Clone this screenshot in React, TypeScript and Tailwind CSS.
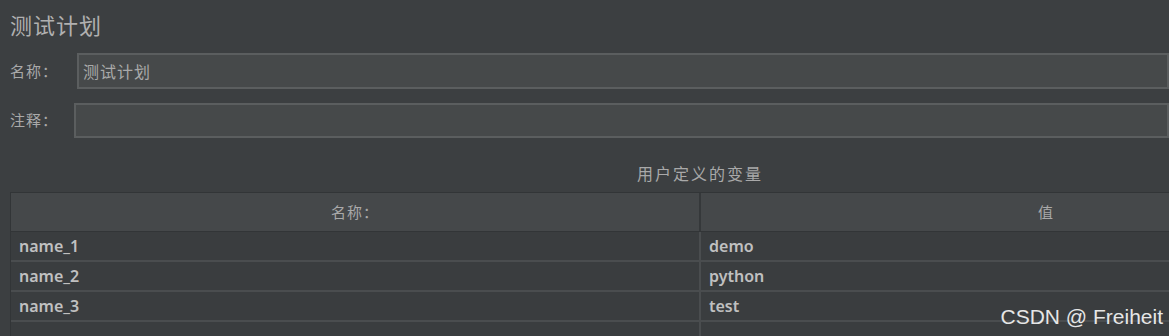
const rows = [
  { name: 'name_1', value: 'demo' },
  { name: 'name_2', value: 'python' },
  { name: 'name_3', value: 'test' },
];

const cjk = "font-['Noto_Sans_CJK_SC','Noto_Sans',sans-serif]";

export default function App() {
  return (
    <div className={`relative h-[336px] w-[1169px] overflow-hidden bg-[#3c3f41] text-[#bbbbbb] ${cjk}`}>
      <h1 className="pl-[10px] pt-[9px] text-[22px] leading-[30px] tracking-[1px] text-[#b0b0b0]">测试计划</h1>

      <div className="mt-[14px] flex items-center">
        <span className="w-[77px] pl-[10px] text-[15px] tracking-[1px] text-[#a9a9a9]">名称：</span>
        <div className="flex h-[36px] flex-1 items-center border-2 border-[#5b5e5f] bg-[#46494a] pl-[4px] text-[16px] tracking-[1px] text-[#a9a9a9]">
          测试计划
        </div>
      </div>

      <div className="mt-[14px] flex items-center">
        <span className="w-[74px] pl-[10px] text-[15px] tracking-[1px] text-[#a9a9a9]">注释：</span>
        <div className="h-[35px] flex-1 border-2 border-[#5b5e5f] bg-[#46494a]" />
      </div>

      <p className="mt-[21px] w-[1400px] text-center text-[16px] leading-[28px] tracking-[2px] text-[#a9a9a9]">用户定义的变量</p>

      <div className="ml-[10px] mt-[5px] w-[1380px] border-l border-t border-[#323537]">
        <div className="grid h-[39px] grid-cols-[690px_690px] border-b border-[#323537] bg-[#45484a] text-[15px] tracking-[1px] text-[#a9a9a9]">
          <div className="flex items-center justify-center border-r-2 border-[#35383a]">名称：</div>
          <div className="flex items-center justify-center">值</div>
        </div>
        {rows.map(r => (
          <div
            key={r.name}
            className="grid h-[30px] grid-cols-[690px_690px] border-b-2 border-[#4a4d4f] bg-[#3a3d3f] font-['Noto_Sans',sans-serif] text-[16px] font-semibold text-[#c0c0c0]"
          >
            <div className="flex items-center border-r-2 border-[#4a4d4f] pl-[8px]">{r.name}</div>
            <div className="flex items-center pl-[8px]">{r.value}</div>
          </div>
        ))}
        <div className="grid h-[30px] grid-cols-[690px_690px] bg-[#3a3d3f]">
          <div className="border-r-2 border-[#4a4d4f]" />
          <div />
        </div>
      </div>

      <span className="absolute right-[6px] top-[301px] font-['Liberation_Sans',sans-serif] text-[21px] text-[#e6e6e6]">
        CSDN @ Freiheit
      </span>
    </div>
  );
}
